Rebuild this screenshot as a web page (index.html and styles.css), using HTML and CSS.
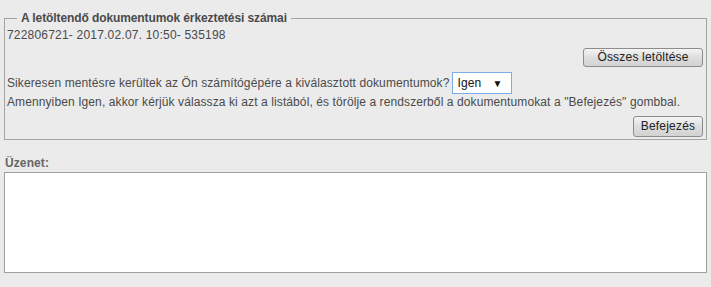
FILE: index.html
```html
<!DOCTYPE html>
<html lang="hu">
<head>
<meta charset="utf-8">
<title>Dokumentumok</title>
<link rel="stylesheet" href="styles.css">
</head>
<body>
<div class="page">
  <fieldset class="box">
    <legend class="box-title">A letöltendő dokumentumok érkeztetési számai</legend>
    <div class="line first">722806721- 2017.02.07. 10:50- 535198</div>
    <div class="actions"><button class="btn wide">Összes letöltése</button></div>
    <div class="line question">Sikeresen mentésre kerültek az Ön számítógépére a kiválasztott dokumentumok? <span class="select"><span class="select-value">Igen</span><span class="select-arrow">▼</span></span></div>
    <div class="line second">Amennyiben Igen, akkor kérjük válassza ki azt a listából, és törölje a rendszerből a dokumentumokat a "Befejezés" gombbal.</div>
    <div class="actions last"><button class="btn">Befejezés</button></div>
  </fieldset>
  <div class="label">Üzenet:</div>
  <textarea class="message"></textarea>
</div>
</body>
</html>
```
FILE: styles.css
```css
html, body {
  margin: 0;
  padding: 0;
  background: #ebebeb;
}
body {
  font-family: "Liberation Sans", Arial, sans-serif;
  font-size: 12px;
  letter-spacing: 0.1px;
  color: #4a4a4a;
}
.page {
  padding: 11px 4px 0 4px;
}
.box {
  margin: 0;
  padding: 0 3px 2px 2px;
  border: 1px solid #a3a3a3;
  border-radius: 0;
}
.box-title {
  font-weight: bold;
  color: #4a4a4a;
  padding: 0 4px;
  margin-left: 10px;
  font-size: 12px;
  letter-spacing: -0.1px;
}
.line {
  line-height: 15px;
  white-space: nowrap;
}
.line.first {
  margin-top: 2px;
  line-height: 16px;
  letter-spacing: 0.2px;
}
.line.second {
  margin-top: 1px;
}
.actions {
  display: flex;
  justify-content: flex-end;
  margin-top: 5px;
}
.actions.last {
  margin-top: 6px;
}
.btn {
  font-family: "Liberation Sans", Arial, sans-serif;
  font-size: 12px;
  letter-spacing: 0.2px;
  color: #222;
  background: linear-gradient(#f5f5f5, #dedede 50%, #d2d2d2);
  border: 1px solid #8c8c8c;
  border-radius: 3px;
  height: 19px;
  padding: 0 10px;
  line-height: 17px;
}
.btn.wide {
  width: 120px;
}
.actions.last .btn {
  height: 21px;
  width: 70px;
  padding: 0;
}
.question {
  display: flex;
  align-items: center;
  gap: 3px;
  margin-top: 5px;
}
.select {
  display: inline-flex;
  align-items: center;
  justify-content: space-between;
  box-sizing: border-box;
  width: 60px;
  height: 22px;
  padding: 0 9px 0 4px;
  background: #fff;
  border: 1px solid #7aaee6;
  color: #111;
  font-size: 12px;
}
.select-arrow {
  font-size: 10px;
  color: #111;
}
.label {
  font-weight: bold;
  color: #666;
  margin-top: 16px;
  padding-left: 1px;
  line-height: 14px;
}
.message {
  display: block;
  box-sizing: border-box;
  width: 703px;
  height: 101px;
  margin: 2px 0 0 0;
  border: 1px solid #a0a0a0;
  background: #fff;
  resize: none;
}
```
